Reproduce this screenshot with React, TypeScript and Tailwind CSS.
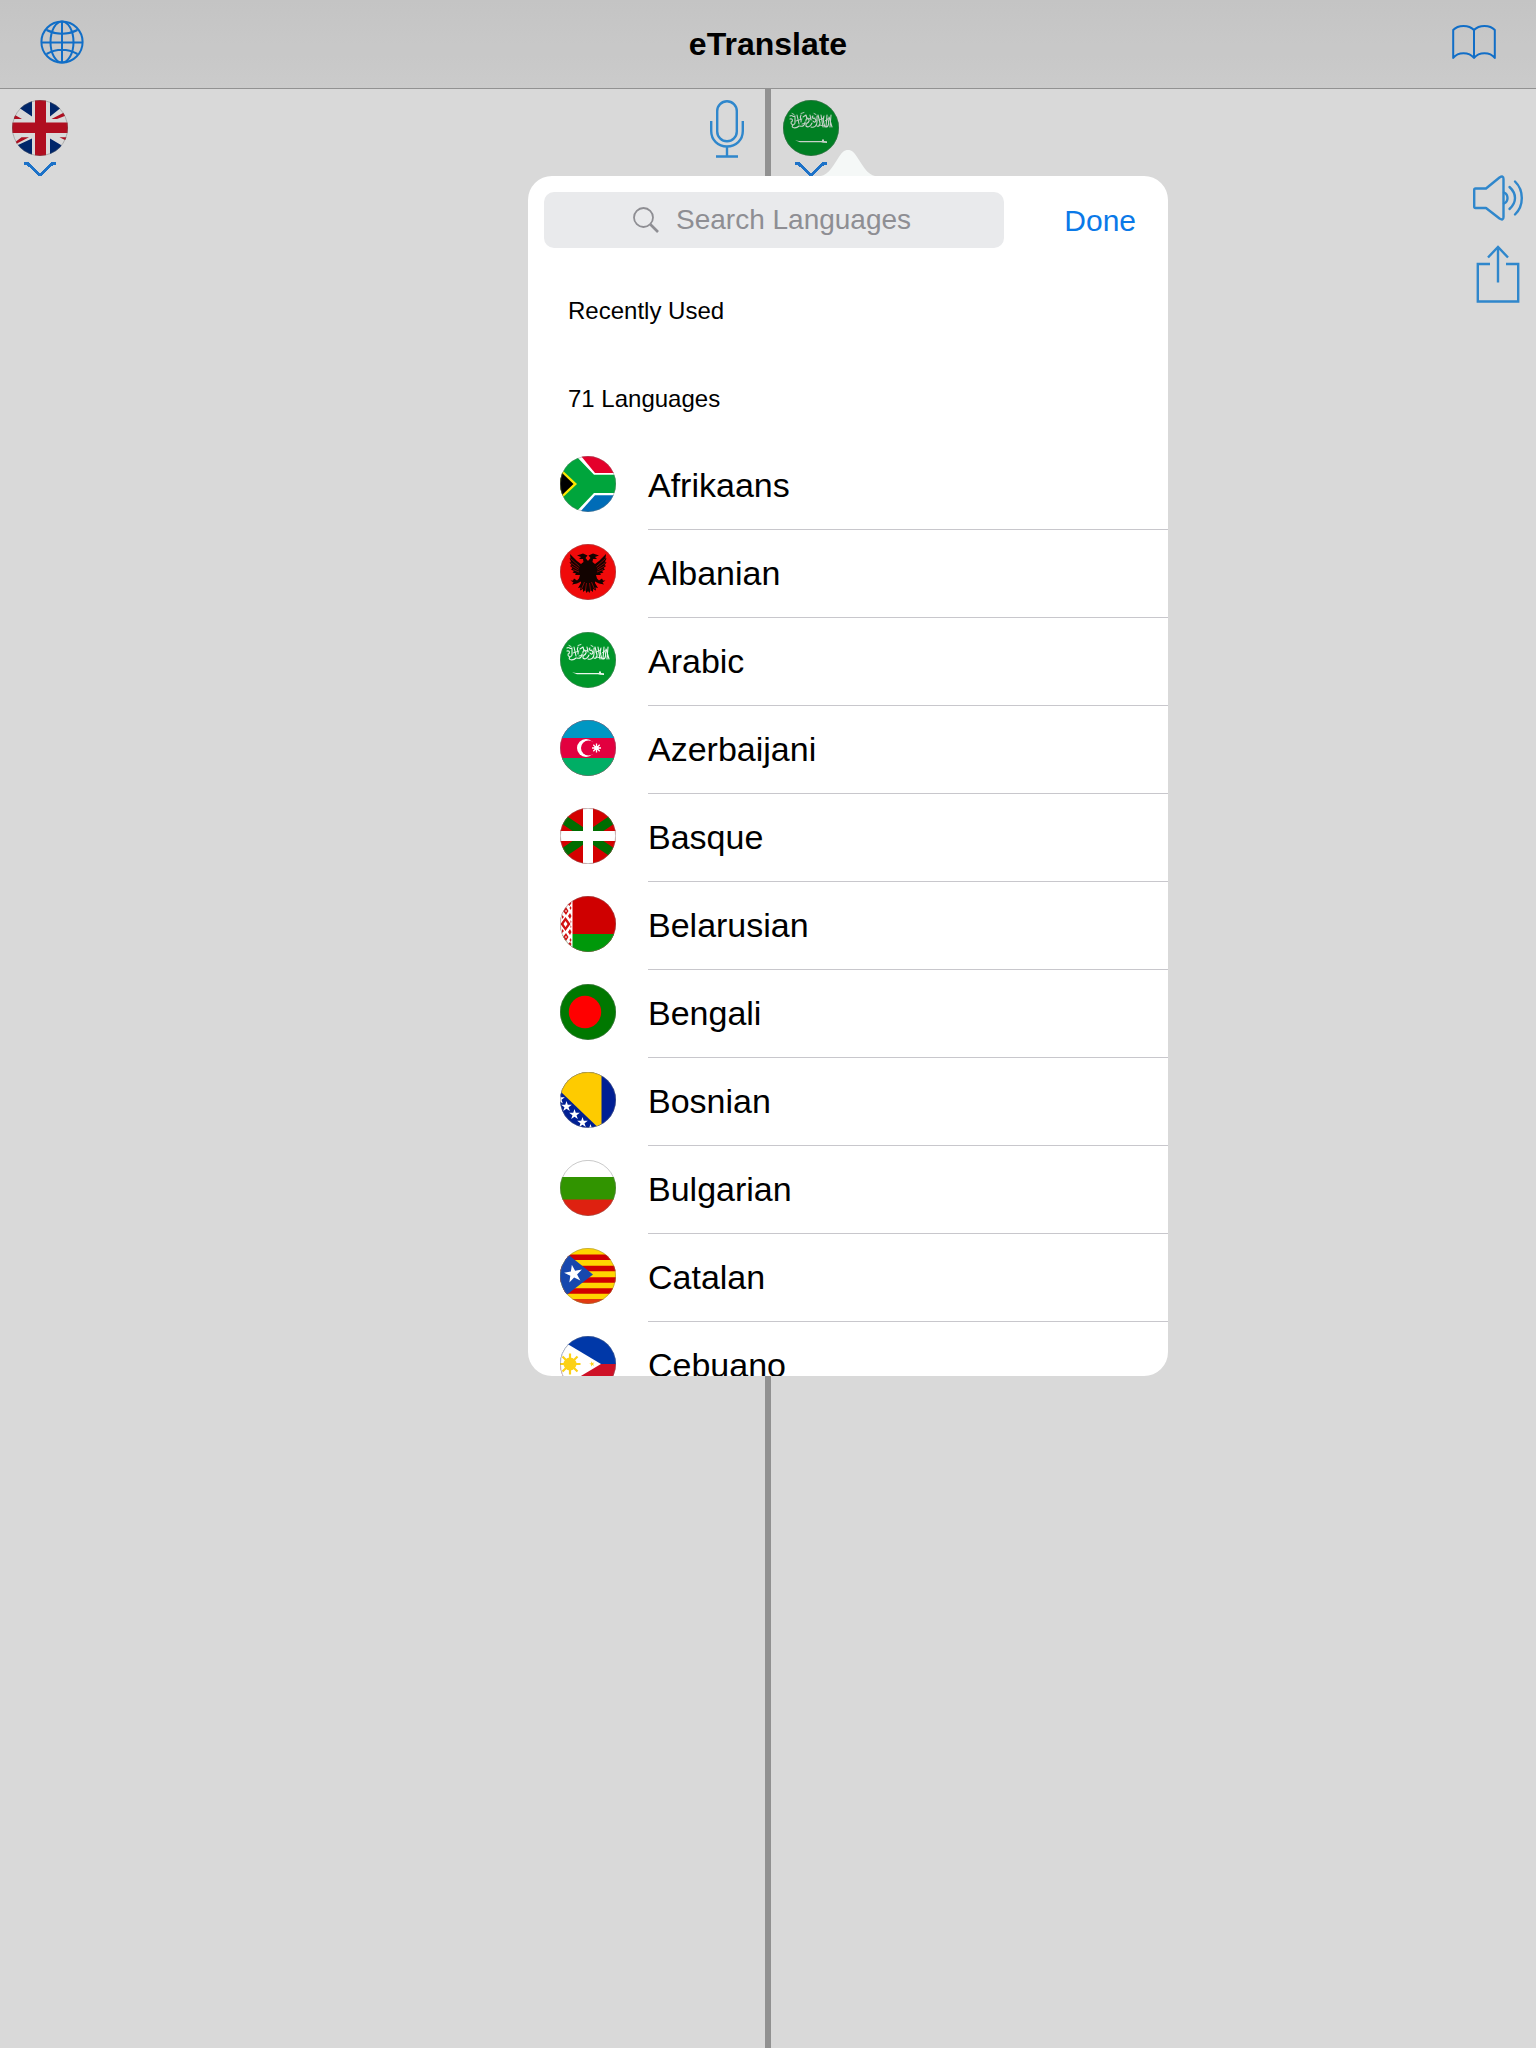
import { useState } from 'react';
import type { ReactNode } from 'react';

// Every flag is drawn on a 56x56 field and clipped to a circle
function Flag({ id, children }: { id: string; children: ReactNode }) {
  return (
    <svg viewBox="0 0 56 56" className="size-14 shrink-0" aria-hidden="true">
      <defs>
        <clipPath id={`clip-${id}`}>
          <circle cx="28" cy="28" r="28" />
        </clipPath>
      </defs>
      <g clipPath={`url(#clip-${id})`}>{children}</g>
      <circle cx="28" cy="28" r="27.6" fill="none" stroke="#777" strokeOpacity="0.5" strokeWidth="0.8" />
    </svg>
  );
}

const STAR = '0,-10 2.25,-3.09 9.51,-3.09 3.63,1.18 5.88,8.09 0,3.82 -5.88,8.09 -3.63,1.18 -9.51,-3.09 -2.25,-3.09';

function UnitedKingdom() {
  return (
    <Flag id="gb">
      <rect width="56" height="56" fill="#fff" />
      <path d="M0 0H20V16.500L6 7ZM38 0H56L48 8.500L38 16.500ZM0 56L6 45L20 38.500V56ZM38 38.500L49 45L56 56H38Z" fill="#002d7d" />
      <path d="M2 14.500L10 19H2ZM39.500 19L52 12.500L54 15.500L45 19ZM2 43L9.500 37.300H17L3 44.500ZM47.500 37.300H56V41L53 40Z" fill="#ce1126" />
      <path d="M0 22.500H23V0H34V22.500H56V33H34V56H23V33H0Z" fill="#cf1126" />
    </Flag>
  );
}

function SaudiArabia({ id }: { id: string }) {
  return (
    <Flag id={id}>
      <rect width="56" height="56" fill="#00962a" />
      <g fill="none" stroke="#e9f6ec" strokeWidth="1.100" strokeLinecap="round" strokeLinejoin="round">
        <path d="M7 16c2-2 3 2 5 0M7 19c3-1 3 3 1 3M12 17v6c0 2-4 2-4 0M14 15l2 9M10 25c-3 3 3 4 6 1M18 15c-2 3 1 4 0 7M17 26c3 1 5-1 5-4M20 17l3-2 1 4M23 21c-1-3 4-3 3 0s-4 2-3 5c2 2 5 0 6-3" />
        <path d="M27 15l1 5M30 16c-2 1 0 3 2 2M30 21c2 3 4-1 2-2M28 27c3 1 6-1 6-5v-6M34 26c2 1 3-1 3-3l-2-8M38 15l2 12M41 16c-2 4 0 7 1 11M44 15l-1 12c3 0 3-5 2-8M48 15l-1 12M46 17l3 10" />
        <path d="M13 21l6-2M24 18l4 1M36 20l5-2M42 21l4-3M9 13.500l2 1M18 13.500l3-1M31 13.500l2 1M36 25l6 1M19 24l4-1" strokeWidth="0.9" />
      </g>
      <path d="M12 40.2L16 41H39V39.4H41V41L44 41.2V43L40 42.8L38 42.2H17Z" fill="#e9f6ec" />
    </Flag>
  );
}

function SouthAfrica() {
  return (
    <Flag id="za">
      <rect width="56" height="56" fill="#fff" />
      <path d="M21 0L35 17H56V0Z" fill="#e4002b" />
      <path d="M20 56L35 39.3H56V56Z" fill="#006cb7" />
      <path d="M0 0H16L34 18.7H56V37H34L16 56H0Z" fill="#00a53c" />
      <path d="M0 12L17 28L0 44Z" fill="#ffe600" />
      <path d="M0 15L13.500 28L0 41Z" fill="#000" />
    </Flag>
  );
}

function Albania() {
  return (
    <Flag id="al">
      <rect width="56" height="56" fill="#f00a0a" />
      <path
        d="M28 17 L25.500 14 L27.500 11.500 L23 9.500 L17 11.500 L21 13 L19 15 L23 15 L23.500 18 L21 20 L17 17 L10 10 L10.500 14 L9.500 14.500 L11 17.500 L9.500 18.500 L11.500 21 L10 22 L12.500 24 L11 25.500 L14 27 L12.500 28.500 L16 29.500 L15 31 L20 31 L19 34.500 L17 36.500 L14 34.500 L13 36.500 L10.500 36.500 L13.500 38.500 L12 40.500 L17 39.500 L21 37.500 L21 39 L18 44 L20.500 43.500 L20 46.500 L23 45 L23 48 L25.500 46 L26.500 49 L28 47 L29.500 49 L30.500 46 L33 48 L33 45 L36 46.500 L35.500 43.500 L38 44 L35 39 L35 37.500 L39 39.500 L44 40.500 L42.500 38.500 L45.500 36.500 L43 36.500 L42 34.500 L39 36.500 L37 34.500 L36 31 L41 31 L40 29.500 L43.500 28.500 L42 27 L45 25.500 L43.500 24 L46 22 L44.500 21 L46.500 18.500 L45 17.500 L46.500 14.500 L45.500 14 L46 10 L39 17 L35 20 L32.500 18 L33 15 L37 15 L35 13 L39 11.500 L33 9.500 L28.500 11.500 L30.500 14 Z"
        fill="#120300"
      />
      <path
        d="M10.500 14.500l9 8M10.500 18.500l8.500 6M11.500 22l7 4M13 25.500l6 2.500M45.500 14.500l-9 8M45.500 18.500l-8.500 6M44.500 22l-7 4M43 25.500l-6 2.500M24.500 38l-3 7M31.500 38l3 7M26.500 39l-1 7M29.500 39l1 7"
        stroke="#f00a0a"
        strokeWidth="0.5"
      />
    </Flag>
  );
}

function Azerbaijan() {
  return (
    <Flag id="az">
      <rect width="56" height="56" fill="#e2003f" />
      <rect width="56" height="18" fill="#0097c3" />
      <rect y="38" width="56" height="18" fill="#00ae65" />
      <circle cx="26" cy="28" r="9" fill="#fff" />
      <circle cx="28.500" cy="28" r="7.500" fill="#e2003f" />
      <path d="M36.500 23.500V32.500M32 28H41M33.300 24.800L39.700 31.200M39.700 24.800L33.300 31.200" stroke="#fff" strokeWidth="1.300" />
      <circle cx="36.500" cy="28" r="2.200" fill="#fff" />
    </Flag>
  );
}

function Basque() {
  return (
    <Flag id="eu">
      <rect width="56" height="56" fill="#d40000" />
      <path d="M0 9L56 47M0 47L56 9" stroke="#006d00" strokeWidth="9" />
      <path d="M28 0V56M0 28H56" stroke="#fff" strokeWidth="10" />
    </Flag>
  );
}

function Belarus() {
  return (
    <Flag id="by">
      <rect width="56" height="56" fill="#cf0000" />
      <rect y="38" width="56" height="18" fill="#00980a" />
      <rect width="12.500" height="56" fill="#fff" />
      <path
        d="M10 5l1.500 2-2 3-2-2zM6 11l2.500 4-2.500 4-3-4zM10.500 10l1 2-1 2-1-2zM10 17l1.500 3-1.500 3-2-3zM5.500 21l5 7-5 7-5-7zM10.500 24l1 2-1 1zM10.500 29l1 2-1 1zM10 33l1.500 3-1.500 3-2-3zM6 37l2.500 4-2.500 4-3-4zM10.500 42l1 2-1 2-1-2zM10 46l1.500 2-1.500 3-2-3zM2 19l2 2-2 2zM2 33l2 2-2 2z"
        fill="#d11111"
      />
      <path d="M5.500 25l2 3-2 3-2-3zM6 14l1 1-1 1-1-1zM6 40l1 1-1 1-1-1z" fill="#fff" />
    </Flag>
  );
}

function Bangladesh() {
  return (
    <Flag id="bd">
      <rect width="56" height="56" fill="#007800" />
      <circle cx="25" cy="28" r="16.200" fill="#ff0000" />
    </Flag>
  );
}

function Bosnia() {
  return (
    <Flag id="ba">
      <rect width="56" height="56" fill="#001f94" />
      <path d="M0 0H41.500V52L37 54.500L0 19Z" fill="#fecb00" />
      <g fill="#fff">
        <polygon points={STAR} transform="translate(-.5 27) scale(.56)" />
        <polygon points={STAR} transform="translate(6.500 34.500) scale(.56)" />
        <polygon points={STAR} transform="translate(14.500 42.500) scale(.56)" />
        <polygon points={STAR} transform="translate(22.500 50.500) scale(.56)" />
        <polygon points={STAR} transform="translate(30.500 57.500) scale(.56)" />
      </g>
    </Flag>
  );
}

function Bulgaria() {
  return (
    <Flag id="bg">
      <rect width="56" height="56" fill="#fff" />
      <rect y="17" width="56" height="23" fill="#319400" />
      <rect y="39.500" width="56" height="17" fill="#de2110" />
    </Flag>
  );
}

function Catalonia() {
  return (
    <Flag id="ct">
      <rect width="56" height="56" fill="#ffd500" />
      <path d="M0 9.300H56M0 20.500H56M0 32H56M0 43H56" stroke="#d00000" strokeWidth="5.400" />
      <rect y="51" width="56" height="5" fill="#e23a10" />
      <path d="M0 0L33 26.500L0 52Z" fill="#1748ae" />
      <polygon points={STAR} transform="translate(13.500 26) rotate(-10) scale(.95)" fill="#fff" />
    </Flag>
  );
}

function Philippines() {
  return (
    <Flag id="ph">
      <rect width="56" height="28" fill="#0038a8" />
      <rect y="28" width="56" height="28" fill="#ce1126" />
      <path d="M-6 0L41 28L-6 56Z" fill="#fff" />
      <path d="M10 17.500V38.500M-.5 28H20.500M2.500 20.500L17.500 35.500M17.500 20.500L2.500 35.500" stroke="#fcd116" strokeWidth="2.200" />
      <circle cx="10" cy="28" r="6.500" fill="#fcd116" />
      <polygon points={STAR} transform="translate(32 28) rotate(-15) scale(.28)" fill="#fcd116" />
    </Flag>
  );
}

function GlobeIcon() {
  return (
    <svg viewBox="0 0 44 44" className="size-11" fill="none" stroke="#1482ea" strokeWidth="2" aria-hidden="true">
      <circle cx="22" cy="22" r="20.600" />
      <ellipse cx="22" cy="22" rx="11.500" ry="20.600" />
      <path d="M22 1V43M1 22.500H43M6.500 10Q22 17.500 37.500 10M6.500 34Q22 25.500 37.500 34" />
    </svg>
  );
}

function BookIcon() {
  return (
    <svg viewBox="0 0 44 36" className="h-9 w-11" fill="none" stroke="#1482ea" strokeWidth="2" strokeLinejoin="round" aria-hidden="true">
      <path d="M22 6C17 .5 6 .5 1.200 6V34C6 27.500 17 27.500 22 34C27 27.500 38 27.500 42.800 34V6C38 .5 27 .5 22 6ZM22 6V34" />
    </svg>
  );
}

function MicIcon() {
  return (
    <svg viewBox="0 0 34 58" className="h-[58px] w-[34px]" fill="none" stroke="#389ff0" strokeWidth="2.400" aria-hidden="true">
      <rect x="7.200" y="1.200" width="19.600" height="40" rx="9.800" />
      <path d="M1.200 21V31C1.200 40 8 46.500 17 46.500S32.800 40 32.800 31V21M17 46.500V56.500M6 56.500H28" />
    </svg>
  );
}

function SpeakerIcon() {
  return (
    <svg viewBox="0 0 50 46" className="h-[46px] w-[50px]" fill="none" stroke="#389ff0" strokeWidth="2.400" strokeLinecap="round" strokeLinejoin="round" aria-hidden="true">
      <path d="M2.500 13.500H13L26.500 2.500Q30.500 0 30.500 4V42Q30.500 46 26.500 43.500L13 33H2.500Q1.200 33 1.200 31.500V15Q1.200 13.500 2.500 13.500Z" />
      <path d="M31 17.500Q34.500 19 34.500 23T31 28.500M36.500 12Q42 17 42 23T36.500 34M42 6.500Q48.800 13 48.800 23T42 39.500" />
    </svg>
  );
}

function ShareIcon() {
  return (
    <svg viewBox="0 0 44 58" className="h-[58px] w-11" fill="none" stroke="#389ff0" strokeWidth="2.400" aria-hidden="true">
      <path d="M14 19H1.800V56.500H42.200V19H30M22 2V37.500M12 12.500L22 2L32 12.500" />
    </svg>
  );
}

function ChevronIcon() {
  return (
    <svg viewBox="0 0 32 14" className="h-3.5 w-8" fill="none" stroke="#2387ec" strokeWidth="3" shapeRendering="crispEdges" aria-hidden="true">
      <path d="M0 1H3L14.500 12H17.500L29 1H32" />
    </svg>
  );
}

function SearchIcon() {
  return (
    <svg viewBox="0 0 28 28" className="size-7 shrink-0" fill="none" stroke="#8e8e93" aria-hidden="true">
      <circle cx="11.500" cy="11.500" r="9.500" strokeWidth="1.800" />
      <path d="M18.500 18.500L26 26" strokeWidth="2.600" />
    </svg>
  );
}

const languages = [
  { name: 'Afrikaans', flag: <SouthAfrica /> },
  { name: 'Albanian', flag: <Albania /> },
  { name: 'Arabic', flag: <SaudiArabia id="sa-list" /> },
  { name: 'Azerbaijani', flag: <Azerbaijan /> },
  { name: 'Basque', flag: <Basque /> },
  { name: 'Belarusian', flag: <Belarus /> },
  { name: 'Bengali', flag: <Bangladesh /> },
  { name: 'Bosnian', flag: <Bosnia /> },
  { name: 'Bulgarian', flag: <Bulgaria /> },
  { name: 'Catalan', flag: <Catalonia /> },
  { name: 'Cebuano', flag: <Philippines /> },
];

function LanguageButton({ label, children }: { label: string; children: ReactNode }) {
  return (
    <button type="button" aria-label={label} className="flex flex-col items-center gap-1.5 self-start">
      {children}
      <ChevronIcon />
    </button>
  );
}

function LanguagePopover() {
  const [query, setQuery] = useState('');
  const visible = languages.filter((l) => l.name.toLowerCase().includes(query.toLowerCase()));

  return (
    <div role="dialog" aria-label="Languages" className="absolute top-[87px] left-1/2 z-20 -ml-60 w-[640px]">
      <svg viewBox="0 0 64 27" className="absolute -top-[26px] left-1/2 -ml-8 h-[27px] w-16" fill="#f5f8f7" aria-hidden="true">
        <path d="M0 27C12 26 15 19 21 10C26 2 28 0 32 0S38 2 43 10C49 19 52 26 64 27Z" />
      </svg>

      <div className="relative flex h-[1200px] flex-col overflow-hidden rounded-3xl bg-white">
        <div className="flex shrink-0 items-start px-4 pt-4 pb-[18px]">
          <label className="flex h-14 w-[460px] items-center justify-center gap-4 rounded-[10px] bg-[#e9eaec]">
            <SearchIcon />
            <input
              type="text"
              aria-label="Search Languages"
              placeholder="Search Languages"
              value={query}
              onChange={(e) => setQuery(e.target.value)}
              className="w-60 bg-transparent text-[28px] text-black outline-none placeholder:text-[#8e8e93]"
            />
          </label>
          <button type="button" className="h-14 flex-1 pt-0.5 pr-4 text-right text-3xl text-[#0a79e8]">
            Done
          </button>
        </div>

        <div className="flex-1 overflow-y-auto [scrollbar-width:none]">
          <h2 className="flex h-[88px] items-center px-10 pt-0.5 text-2xl">Recently Used</h2>
          <h2 className="flex h-[88px] items-center px-10 pt-0.5 text-2xl">71 Languages</h2>
          <ul>
            {visible.map((l) => (
              <li key={l.name}>
                <button type="button" className="flex h-[88px] w-full items-stretch gap-8 pl-8 text-left text-[34px]">
                  <span className="flex items-center pb-1">{l.flag}</span>
                  <span className="flex flex-1 items-center border-b border-[#c8c7cc]">{l.name}</span>
                </button>
              </li>
            ))}
          </ul>
        </div>
      </div>
    </div>
  );
}

function App() {
  return (
    <div className="relative flex min-h-screen flex-col bg-white font-['Liberation_Sans',Arial,sans-serif] text-black">
      <header className="flex h-[89px] items-center justify-between border-b border-[#acacac] bg-linear-to-b from-[#e7e7e7] to-[#efefef] px-10">
        <button type="button" aria-label="Web" className="pb-1">
          <GlobeIcon />
        </button>
        <h1 className="text-[32px] font-bold">eTranslate</h1>
        <button type="button" aria-label="Phrasebook" className="pb-1">
          <BookIcon />
        </button>
      </header>

      <main className="relative flex flex-1">
        <section className="flex flex-1 justify-between pt-[11px] pr-[13px] pl-3">
          <LanguageButton label="Translate from English">
            <UnitedKingdom />
          </LanguageButton>
          <div className="flex flex-col items-center gap-[18px]">
            <button type="button" aria-label="Dictate">
              <MicIcon />
            </button>
            <button type="button" aria-label="Speak source text">
              <SpeakerIcon />
            </button>
          </div>
        </section>

        <div className="w-1.5 bg-[#ababab]" />

        <section className="flex flex-1 justify-between pt-[11px] pr-[13px] pl-3">
          <LanguageButton label="Translate to Arabic">
            <SaudiArabia id="sa-target" />
          </LanguageButton>
          <div className="flex flex-col items-center gap-6 pt-[75px]">
            <button type="button" aria-label="Speak translation">
              <SpeakerIcon />
            </button>
            <button type="button" aria-label="Share">
              <ShareIcon />
            </button>
          </div>
        </section>

        <LanguagePopover />
      </main>

      {/* dims everything behind the popover */}
      <div className="pointer-events-none absolute inset-0 z-10 bg-black/15" />
    </div>
  );
}

export default App;
